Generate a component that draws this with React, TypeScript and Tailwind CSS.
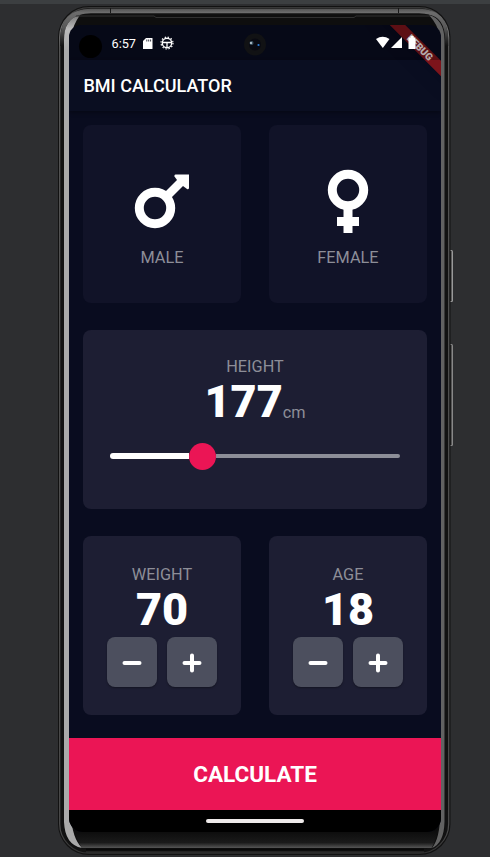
import React, { useState } from "react";

const font = "font-['Roboto','Liberation_Sans',sans-serif]";

function Frame() {
  return (
    <svg className="absolute inset-0" width="490" height="857" viewBox="0 0 490 857" fill="none">
      <defs>
        <linearGradient id="rim" x1="0" y1="6" x2="0" y2="854" gradientUnits="userSpaceOnUse">
          <stop offset="0" stopColor="#333" />
          <stop offset="0.03" stopColor="#777" />
          <stop offset="0.05" stopColor="#5a5a5a" />
          <stop offset="0.97" stopColor="#4d4d4d" />
          <stop offset="1" stopColor="#303030" />
        </linearGradient>
        <linearGradient id="band" x1="0" y1="8" x2="0" y2="46" gradientUnits="userSpaceOnUse">
          <stop offset="0" stopColor="#4c4c4c" />
          <stop offset="0.12" stopColor="#6c6c6c" />
          <stop offset="0.5" stopColor="#5a5a5a" />
          <stop offset="1" stopColor="#121212" />
        </linearGradient>
        <linearGradient id="chin" x1="0" y1="830" x2="0" y2="848" gradientUnits="userSpaceOnUse">
          <stop offset="0" stopColor="#0b0b0b" />
          <stop offset="0.7" stopColor="#1a1a1a" />
          <stop offset="1" stopColor="#555" />
        </linearGradient>
        <linearGradient id="lightTop" x1="0" y1="15" x2="0" y2="50" gradientUnits="userSpaceOnUse">
          <stop offset="0" stopColor="#777" />
          <stop offset="0.4" stopColor="#bcbcbc" />
          <stop offset="1" stopColor="#aaa" />
        </linearGradient>
      </defs>
      <rect x="449.500" y="250" width="3.500" height="52" rx="1.500" fill="#999" />
      <rect x="449.500" y="344" width="3.500" height="102" rx="1.500" fill="#888" />
      <rect x="450" y="251" width="1.500" height="50" fill="#222" />
      <rect x="450" y="345" width="1.500" height="100" fill="#222" />
      <rect x="58" y="6" width="392.500" height="849" rx="31" fill="#121212" />
      <rect x="59.700" y="7.700" width="389" height="845.500" rx="29.500" stroke="url(#rim)" strokeWidth="1.200" />
      <path d="M62.500 46V40Q62.500 11 91 11H419Q446 11 446 40V46" stroke="url(#band)" strokeWidth="4.500" />
      <path d="M64 822V40Q64 17 83 14.500H428Q445 17 445 40V822Q445 846 426 848.500H83Q64 846 64 822Z" fill="#0e0e0e" />
      <path d="M64 822V40Q64 19 80 15Q73 25 71 36V815Q72 838 82 848Q65 845 64 822Z" fill="url(#lightTop)" />
      <path d="M444.500 822V40Q444 19 429 15Q438 25 440 36V815Q440 838 432 848Q444 843 444.500 822Z" fill="#626262" />
      <path d="M76 16H154L156 17.500H354L356 16H430" stroke="#303030" />
      <path d="M71 815H439Q438 838 431.500 848H82Q76 840 74.500 828Z" fill="url(#chin)" />
      <path d="M86 849.500H424" stroke="#080808" strokeWidth="2" />
      <path d="M86 852H424" stroke="#353535" />
      <path d="M110.500 8V13M398.500 8V13" stroke="#181818" />
    </svg>
  );
}

function StatusBar() {
  return (
    <header className="relative z-10 flex h-[35px] shrink-0 items-center bg-black/25 pl-[10px] text-white">
      <span className="mt-[7px] h-[23px] w-[23px] rounded-full bg-black" />
      <span className="ml-[9.500px] mt-[2px] w-[26px] text-[12.700px] leading-4">6:57</span>
      <svg className="ml-[4.500px] mt-px" width="12" height="13" viewBox="0 0 12 13">
        <path d="M4 1h6q.5 0 .5.5v10q0 .5-.5.5H1.500q-.5 0-.5-.5V4Z" fill="white" />
        <path d="M4.800 2.500v2M6.700 2.500v2M8.600 2.500v2" stroke="#060917" strokeWidth=".8" />
      </svg>
      <svg className="ml-[6px]" width="14" height="14" viewBox="0 0 14 14" fill="none" stroke="white">
        <circle cx="7" cy="7" r="4.700" strokeWidth="1.400" />
        <circle cx="7" cy="7" r="6" strokeWidth="1.200" strokeDasharray="1.400 1.740" />
        <path d="M3 6.500h8M7 6.500v5" strokeWidth="1.300" />
      </svg>
      <svg className="ml-auto mr-[22px] mt-px" width="43" height="14" viewBox="0 0 43 14" fill="white">
        <path d="M0 3Q6.500-1.500 13.500 3L6.800 12Z" />
        <path d="M26 1v11H15Z" />
        <path d="M32.500 1.500h2V0h3v1.500h2v11.500h-7Z" />
      </svg>
    </header>
  );
}

function Camera() {
  return (
    <svg className="absolute left-[244px] top-[33px] z-20" width="22" height="23" viewBox="0 0 22 23">
      <circle cx="11" cy="11.500" r="11" fill="#111214" />
      <circle cx="11" cy="11.500" r="6" fill="#080911" />
      <circle cx="7.500" cy="10" r="2" fill="#3d5361" />
      <circle cx="7" cy="10" r=".9" fill="#d5e4ed" />
      <circle cx="14.500" cy="12" r="1.100" fill="#2b7dd8" />
    </svg>
  );
}

function Gender({ male = false }: { male?: boolean }) {
  return (
    <button className="flex h-[178px] w-[158px] flex-col items-center rounded-[8px] bg-[#111328] pt-[44px]">
      <svg width="60" height="66" viewBox="0 0 60 66" fill="none" stroke="white" strokeWidth="9">
        {male ? (
          <>
            <circle cx="23" cy="39" r="15.700" />
            <path d="M34 28L51 11" strokeWidth="8.500" />
            <path d="M43.500 5.500H57V19Q56.500 21 55 20L51 17L45 11L42.500 7.500Q42 5.500 43.500 5.500Z" fill="white" stroke="none" />
          </>
        ) : (
          <>
            <circle cx="30" cy="21" r="15.700" />
            <path d="M30 39V64M19 52.500H41" />
          </>
        )}
      </svg>
      <span className="mt-[13px] text-[16.300px] leading-[20px] text-[#8d8e98]">{male ? "MALE" : "FEMALE"}</span>
    </button>
  );
}

function RoundButton({ plus = false, onClick }: { plus?: boolean; onClick: () => void }) {
  return (
    <button onClick={onClick} aria-label={plus ? "Increase" : "Decrease"} className="flex h-[50px] w-[50px] items-center justify-center rounded-[8px] bg-[#4c4f5e] shadow-[0_1px_2px_rgba(0,0,0,.35)]">
      <svg className="mt-[2px]" width="22" height="22" viewBox="0 0 22 22" fill="none" stroke="white" strokeWidth="4" strokeLinecap="round">
        <path d={plus ? "M3.500 11H18.500M11 3.500V18.500" : "M3.500 11H18.500"} />
      </svg>
    </button>
  );
}

function Counter({ label, initial }: { label: string; initial: number }) {
  const [value, setValue] = useState(initial);
  return (
    <section className="flex h-[179px] w-[158px] flex-col items-center rounded-[8px] bg-[#1d1e33] pt-[29px]">
      <span className="text-[16.300px] leading-[20px] text-[#8d8e98]">{label}</span>
      <strong className="mb-[3px] text-[45px] font-black leading-[49px] text-white">{value}</strong>
      <div className="flex gap-[9.500px]">
        <RoundButton onClick={() => setValue(value - 1)} />
        <RoundButton plus onClick={() => setValue(value + 1)} />
      </div>
    </section>
  );
}

export default function App() {
  return (
    <div className={`relative h-[857px] w-[490px] overflow-hidden border-t-[4px] border-[#3c3f41] bg-[#2d2e30] ${font}`}>
      <div className="absolute inset-x-0 -top-1 h-[857px]">
        <Frame />
      </div>
      <div className="relative ml-[69px] mt-[21px] flex h-[807px] w-[372px] flex-col overflow-hidden rounded-b-[14px] rounded-t-[12px] bg-[#090c1f]">
        <StatusBar />
        <h1 className="flex h-[51px] shrink-0 items-center bg-[#0a0e21] pl-[14.500px] text-[18px] font-medium text-white shadow-[0_2px_4px_rgba(0,0,0,.3)]">BMI CALCULATOR</h1>
        <main className="flex h-[627px] shrink-0 flex-col gap-[27.500px] px-[14px] pt-[13.500px]">
          <div className="flex justify-between">
            <Gender male />
            <Gender />
          </div>
          <section className="flex h-[179px] shrink-0 flex-col items-center rounded-[8px] bg-[#1d1e33] pt-[27px]">
            <span className="text-[16.300px] leading-[20px] text-[#8d8e98]">HEIGHT</span>
            <div className="flex h-[50px] items-baseline leading-[50px] text-white">
              <strong className="text-[45px] font-black">177</strong>
              <span className="relative top-px text-[16.300px] text-[#8d8e98]">cm</span>
            </div>
            <div className="mt-[15px] flex h-[28px] w-[290px] items-center">
              <span className="h-[5.500px] w-[78.500px] rounded-l-full bg-white" />
              <span className="h-[27px] w-[27px] rounded-full bg-[#eb1555]" />
              <span className="h-[4px] flex-1 rounded-r-full bg-[#8d8e98]" />
            </div>
          </section>
          <div className="-mt-[0.500px] flex justify-between">
            <Counter label="WEIGHT" initial={70} />
            <Counter label="AGE" initial={18} />
          </div>
        </main>
        <button className="h-[72px] shrink-0 bg-[#eb1555] pt-[2px] text-[22.500px] font-bold text-white">CALCULATE</button>
        <footer className="flex h-[22px] shrink-0 justify-center bg-black pt-[9px]">
          <span className="h-[4px] w-[98px] rounded-full bg-[#eeeaea]" />
        </footer>
        <div className="absolute -right-[38.500px] top-[16.500px] flex h-[11px] w-[120px] rotate-45 items-center justify-center bg-[#7d141b] text-[10px] font-black text-white/90 shadow-lg">DEBUG</div>
      </div>
      <div className="absolute inset-x-0 -top-1"><Camera /></div>
    </div>
  );
}
